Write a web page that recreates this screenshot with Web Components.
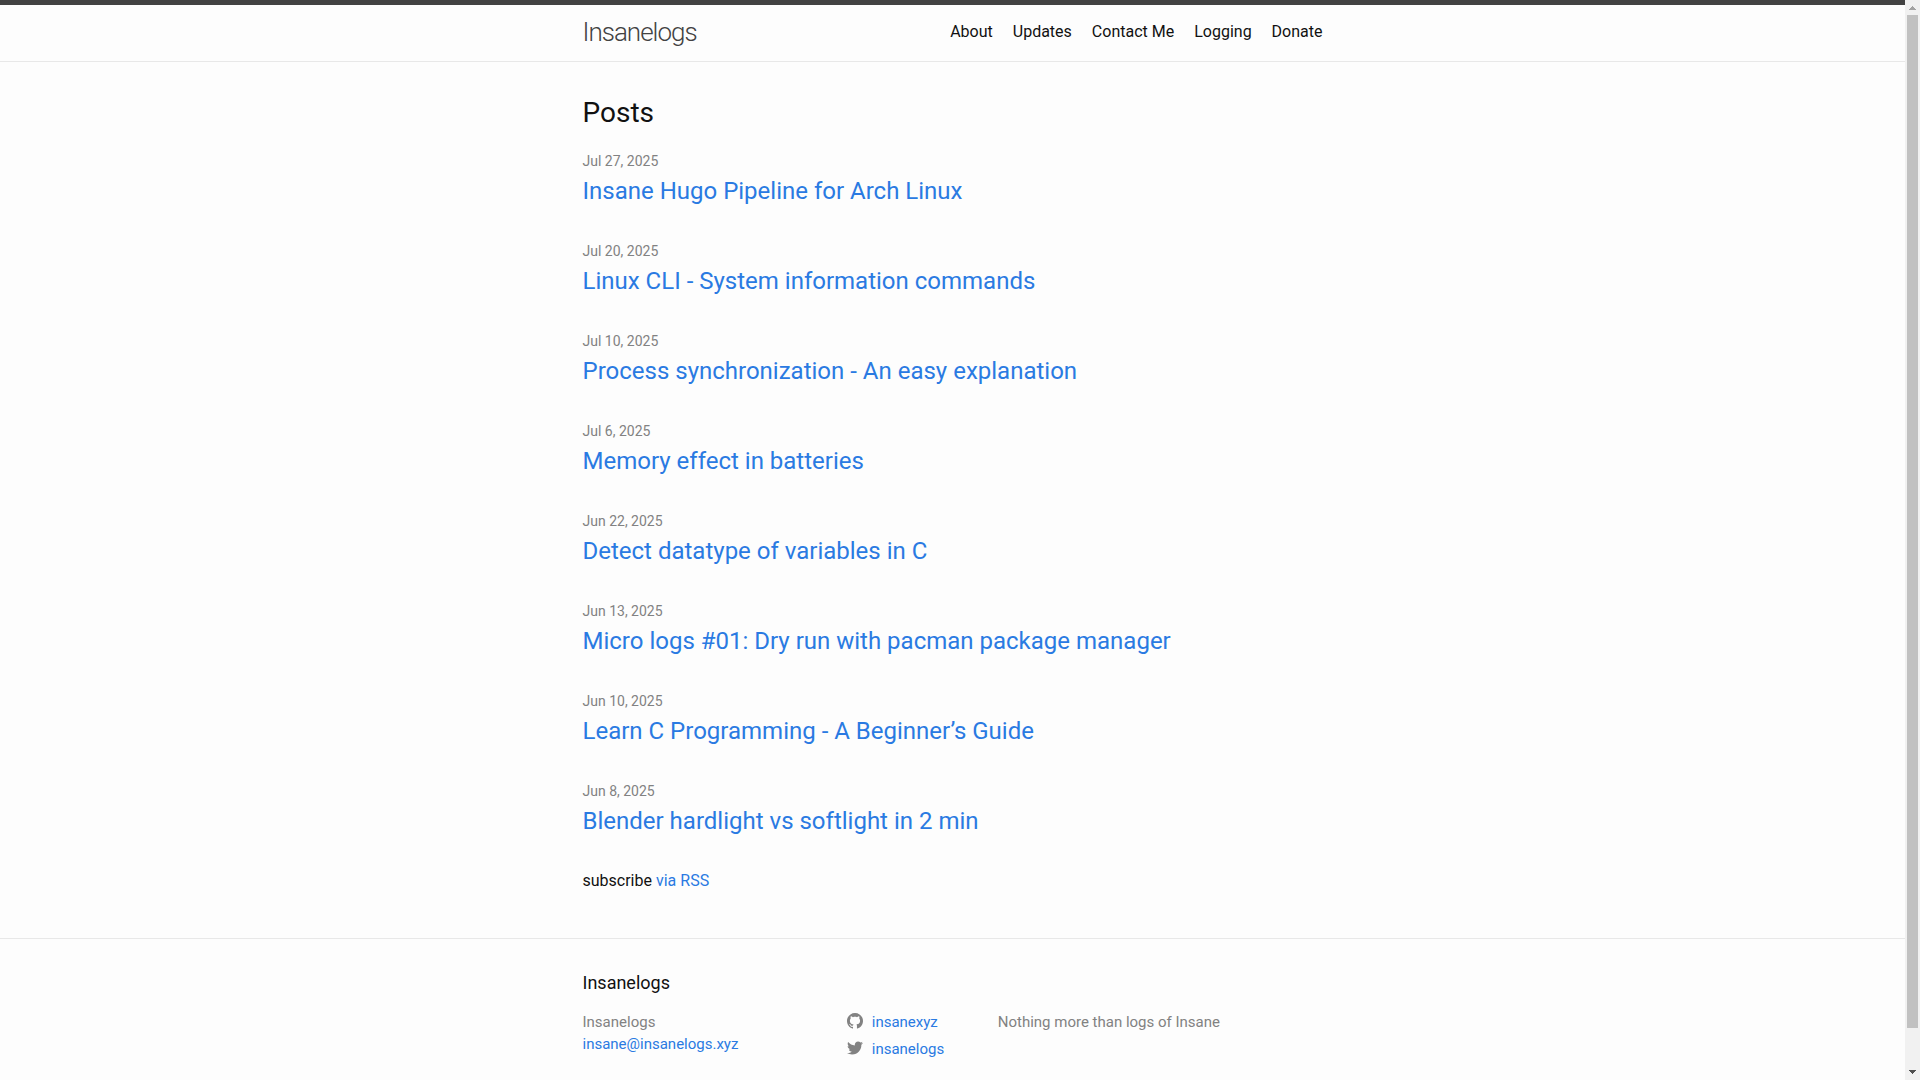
<!DOCTYPE html>
<html lang="en">
<head>
<meta charset="utf-8">
<meta name="viewport" content="width=device-width, initial-scale=1">
<title>Insanelogs</title>
<style>
  html, body { margin: 0; height: 100%; }
  body {
    font: 400 16px/24px Roboto, "Liberation Sans", sans-serif;
    color: #111;
    background: #fdfdfd;
    --brand: #2a7ae2;
    --grey: #828282;
    --line: #e8e8e8;
  }
</style>
</head>
<body>
<blog-shell>
  <site-header>
    <nav-link href="/about">About</nav-link>
    <nav-link href="/updates">Updates</nav-link>
    <nav-link href="/contact">Contact Me</nav-link>
    <nav-link href="/logging">Logging</nav-link>
    <nav-link href="/donate">Donate</nav-link>
  </site-header>
  <post-list>
    <post-item date="Jul 27, 2025">Insane Hugo Pipeline for Arch Linux</post-item>
    <post-item date="Jul 20, 2025">Linux CLI - System information commands</post-item>
    <post-item date="Jul 10, 2025">Process synchronization - An easy explanation</post-item>
    <post-item date="Jul 6, 2025">Memory effect in batteries</post-item>
    <post-item date="Jun 22, 2025">Detect datatype of variables in C</post-item>
    <post-item date="Jun 13, 2025">Micro logs #01: Dry run with pacman package manager</post-item>
    <post-item date="Jun 10, 2025">Learn C Programming - A Beginner’s Guide</post-item>
    <post-item date="Jun 8, 2025">Blender hardlight vs softlight in 2 min</post-item>
  </post-list>
  <site-footer>
    <social-link slot="social" icon="github" href="https://github.com/insanexyz">insanexyz</social-link>
    <social-link slot="social" icon="twitter" href="https://twitter.com/insanelogs">insanelogs</social-link>
    <span slot="about">Nothing more than logs of Insane</span>
  </site-footer>
</blog-shell>

<script>
const define = (name, html, setup) => {
  const template = document.createElement('template');
  template.innerHTML = html;
  customElements.define(name, class extends HTMLElement {
    constructor() {
      super();
      this.attachShadow({ mode: 'open' }).append(template.content.cloneNode(true));
    }
    connectedCallback() { if (setup) setup(this, this.shadowRoot); }
  });
};

const wrapper = '.wrapper { box-sizing: border-box; max-width: 800px; margin: 0 auto; padding: 0 30px; }';

define('scroll-rail', `
  <style>
    :host { display: flex; flex-direction: column; width: 15px; background: #f1f1f1; }
    svg { display: block; flex: none; width: 15px; height: 15px; }
    .track { display: flow-root; flex: 1; padding: 0 2px; }
    .thumb { height: var(--thumb, 100%); margin-top: var(--offset, 0); background: #c1c1c1; }
  </style>
  <svg viewBox="0 0 15 15" shape-rendering="crispEdges"><path d="M4 10V9h1V8h1V7h1V6h1v1h1v1h1v1h1v1z" fill="#a3a3a3"/></svg>
  <div class="track"><div class="thumb"></div></div>
  <svg viewBox="0 0 15 15" shape-rendering="crispEdges"><path d="M4 5h7v1h-1v1H9v1H8v1H7V8H6V7H5V6H4z" fill="#505050"/></svg>
`);

define('blog-shell', `
  <style>
    :host { display: flex; height: 100vh; }
    .page { flex: 1; min-width: 0; overflow-y: auto; scrollbar-width: none; }
  </style>
  <div class="page"><slot></slot></div>
  <scroll-rail></scroll-rail>
`, (host, root) => {
  const page = root.querySelector('.page');
  const rail = root.querySelector('scroll-rail');
  const update = () => {
    const track = page.clientHeight - 30;
    rail.style.setProperty('--thumb', Math.round(track * page.clientHeight / page.scrollHeight) + 'px');
    rail.style.setProperty('--offset', Math.round(track * page.scrollTop / page.scrollHeight) + 'px');
  };
  page.addEventListener('scroll', update);
  new ResizeObserver(update).observe(page);
});

define('nav-link', `
  <style>
    :host { display: block; }
    a { color: #111; text-decoration: none; }
    a:hover { text-decoration: underline; }
  </style>
  <a><slot></slot></a>
`, (host, root) => { root.querySelector('a').href = host.getAttribute('href'); });

define('site-header', `
  <style>
    :host { display: block; border-top: 5px solid #424242; border-bottom: 1px solid var(--line); }
    ${wrapper}
    .wrapper { display: flex; justify-content: space-between; min-height: 56px; }
    .title { font-size: 26px; font-weight: 300; line-height: 54px; letter-spacing: -1px; color: #424242; text-decoration: none; }
    nav { display: flex; gap: 20px; line-height: 54px; }
  </style>
  <header class="wrapper">
    <a class="title" href="/">Insanelogs</a>
    <nav><slot></slot></nav>
  </header>
`);

define('post-item', `
  <style>
    :host { display: block; margin-bottom: 30px; }
    time { display: block; font-size: 14px; color: var(--grey); }
    h3 { margin: 0; font-size: 24px; line-height: 36px; font-weight: 400; }
    a { color: var(--brand); text-decoration: none; }
    a:hover { color: #111; text-decoration: underline; }
  </style>
  <time></time>
  <h3><a href="#"><slot></slot></a></h3>
`, (host, root) => { root.querySelector('time').textContent = host.getAttribute('date'); });

define('post-list', `
  <style>
    :host { display: block; padding: 30px 0; }
    ${wrapper}
    h2 { margin: 0 0 15px; font-size: 28px; line-height: 42px; font-weight: 400; }
    p { margin: 0 0 15px; }
    a { color: var(--brand); text-decoration: none; }
  </style>
  <main class="wrapper">
    <h2>Posts</h2>
    <slot></slot>
    <p>subscribe <a href="/feed.xml">via RSS</a></p>
  </main>
`);

const icons = {
  github: '<path d="M8 0C3.58 0 0 3.582 0 8c0 3.535 2.292 6.533 5.47 7.59.4.075.547-.172.547-.385 0-.19-.007-.693-.01-1.36-2.226.483-2.695-1.073-2.695-1.073-.364-.924-.89-1.17-.89-1.17-.725-.496.056-.486.056-.486.803.056 1.225.824 1.225.824.714 1.223 1.873.87 2.33.665.072-.517.278-.87.507-1.07-1.777-.2-3.644-.888-3.644-3.953 0-.873.31-1.587.823-2.147-.09-.202-.36-1.015.07-2.117 0 0 .67-.215 2.2.82.64-.178 1.32-.266 2-.27.68.004 1.36.092 2 .27 1.52-1.035 2.19-.82 2.19-.82.43 1.102.16 1.915.08 2.117.51.56.82 1.274.82 2.147 0 3.073-1.87 3.75-3.65 3.947.28.24.54.73.54 1.48 0 1.07-.01 1.93-.01 2.19 0 .21.14.46.55.38C13.71 14.53 16 11.53 16 8c0-4.418-3.582-8-8-8"/>',
  twitter: '<path d="M15.969 3.058c-.586.26-1.217.436-1.878.515.675-.405 1.194-1.045 1.438-1.809-.632.375-1.332.647-2.076.793-.596-.636-1.446-1.033-2.387-1.033-1.806 0-3.27 1.464-3.27 3.27 0 .256.029.506.085.745C5.163 5.404 2.753 4.102 1.14 2.124c-.281.482-.442 1.044-.442 1.643 0 1.134.577 2.135 1.455 2.722-.536-.017-1.04-.164-1.481-.409v.041c0 1.584 1.127 2.906 2.623 3.206-.274.075-.563.115-.861.115-.211 0-.416-.021-.615-.059.416 1.299 1.624 2.245 3.055 2.271-1.119.877-2.529 1.4-4.061 1.4-.264 0-.524-.015-.78-.046 1.447.928 3.166 1.469 5.013 1.469 6.015 0 9.304-4.983 9.304-9.304 0-.142-.003-.283-.009-.423.639-.461 1.193-1.037 1.628-1.692z"/>'
};

define('social-link', `
  <style>
    :host { display: block; }
    a { display: flex; gap: 9px; color: var(--brand); text-decoration: none; }
    svg { flex: none; width: 16px; height: 16px; margin-top: 2px; fill: var(--grey); }
  </style>
  <a><svg viewBox="0 0 16 16" aria-hidden="true"></svg><span><slot></slot></span></a>
`, (host, root) => {
  root.querySelector('a').href = host.getAttribute('href');
  root.querySelector('svg').innerHTML = icons[host.getAttribute('icon')];
});

define('site-footer', `
  <style>
    :host { display: block; border-top: 1px solid var(--line); padding: 30px 0; }
    ${wrapper}
    h2 { margin: 0 0 15px; font-size: 18px; line-height: 27px; font-weight: 400; }
    .columns { display: grid; grid-template-columns: 35% 20% 45%; margin-left: -15px; font-size: 15px; line-height: 22px; color: var(--grey); }
    .columns > div { padding: 0 0 30px 15px; }
    .social { display: flex; flex-direction: column; gap: 5px; }
    a { color: var(--brand); text-decoration: none; }
  </style>
  <footer class="wrapper">
    <h2>Insanelogs</h2>
    <div class="columns">
      <div>Insanelogs<br><a href="mailto:insane@insanelogs.xyz">insane@insanelogs.xyz</a></div>
      <div class="social"><slot name="social"></slot></div>
      <div><slot name="about"></slot></div>
    </div>
  </footer>
`);
</script>
</body>
</html>
